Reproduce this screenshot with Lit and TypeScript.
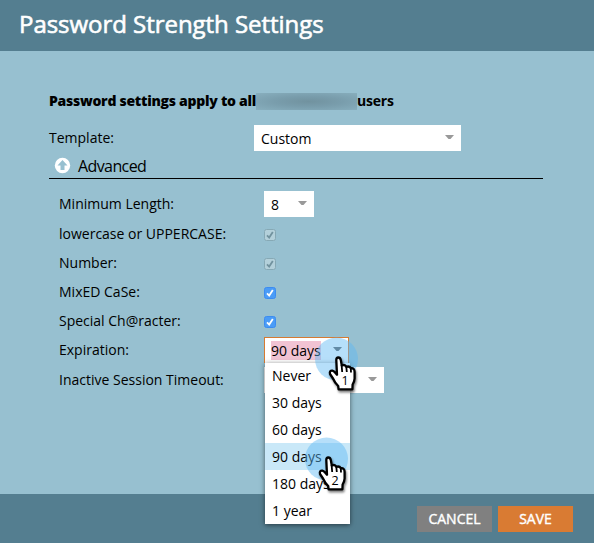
import { LitElement, html, css } from "lit";
import { customElement, property } from "lit/decorators.js";

@customElement("check-box")
class CheckBox extends LitElement {
  @property({ type: Boolean }) locked = false;
  static styles = css`
    :host { display: block; width: 12px; height: 12px; }
    svg { display: block; }
    .box { fill: #4a9cf7; stroke: #3c8cf0; }
    .tick { fill: none; stroke: #fff; stroke-width: 1.8; }
    .locked .box { fill: #b3d0da; stroke: #86a9b5; }
    .locked .tick { stroke: #71929e; }
  `;
  render() {
    return html`<svg class=${this.locked ? "locked" : ""} width="12" height="12" viewBox="0 0 12 12">
      <rect class="box" x=".5" y=".5" width="11" height="11" rx="2" />
      <path class="tick" d="M3 6.3 L5.2 8.6 L8.8 3" />
    </svg>`;
  }
}

@customElement("select-field")
class SelectField extends LitElement {
  @property() value = "";
  @property({ type: Boolean }) open = false;
  static styles = css`
    :host { display: flex; box-sizing: border-box; height: 26px; background: #fff; padding: 0 7px 0 7px;
      justify-content: space-between; align-items: flex-start; line-height: 27px; }
    :host([open]) { border: 1px solid #d57b33; border-bottom: 0; padding: 0 6px; line-height: 26px; }
    .mark { background: #f1c3d3; line-height: 19px; margin-top: 3px; height: 19px; }
    svg { margin-top: 10px; fill: #999; }
    :host([open]) svg { margin-top: 9px; fill: #666; }
  `;
  render() {
    return html`<span class=${this.open ? "mark" : ""}>${this.value}</span>
      <svg width="9" height="5" viewBox="0 0 9 5"><path d="M0 0H9L5.5 4H3.5Z" /></svg>`;
  }
}

@customElement("click-hand")
class ClickHand extends LitElement {
  @property() step = "";
  static styles = css`
    :host { display: block; width: 50px; height: 56px; }
    svg { display: block; overflow: visible; }
    .halo { fill: #5db8f3; opacity: .45; }
    .hand { fill: #fff; stroke: #000; stroke-width: 2.3; stroke-linejoin: round; filter: drop-shadow(1px 2px 1px rgba(0, 0, 0, .5)); }
    .folds { fill: none; stroke: #000; stroke-width: 1.8; }
    text { font: 12.5px "Open Sans", sans-serif; text-anchor: middle; }
  `;
  render() {
    return html`<svg width="50" height="56" viewBox="0 0 50 56">
      <circle class="halo" cx="21.5" cy="23" r="21.5" />
      <path class="hand" d="M21.3 24 Q21.3 21.5 23.3 21.5 Q25.3 21.5 25.8 24 L26.8 29.5 Q29.9 28 31.3 30.8 Q34.5 29.7 35.8 32.3 Q39.6 31.8 39.6 36 L39.6 42.5 Q39.5 45.5 37.6 48.5 L37.4 53.3 L23.6 53.3 L23.2 50 Q19.6 46.5 18 42.5 L15 38 Q14.2 34.4 17.3 34.6 Q19 35 22 38.7 Z" />
      <path class="folds" d="M26.6 29 L27.2 36 M31.3 31 L31.8 36 M35.8 32.5 L36 36.5" />
      <text x="30" y="48.5">${this.step}</text>
    </svg>`;
  }
}

@customElement("app-root")
class AppRoot extends LitElement {
  static styles = css`
    :host { display: flex; flex-direction: column; box-sizing: border-box; width: 594px; height: 543px; position: relative;
      overflow: hidden; background: #97c0d0; color: #000; font: 14px "Open Sans", sans-serif; }
    .head { height: 51px; background: #547e90; color: #fff; font-size: 24px; line-height: 48px; padding-left: 19px;
      white-space: nowrap; letter-spacing: -.04px; -webkit-text-stroke: .6px #fff; }
    .body { flex: 1; padding: 38px 51px 0 49px; }
    .intro { display: flex; height: 24px; line-height: 24px; font-weight: 700; white-space: nowrap; letter-spacing: -.22px; }
    .intro b { width: 207px; letter-spacing: -.27px; }
    .redacted { width: 101px; height: 17px; margin-top: 4px;
      background: radial-gradient(ellipse at 52% 50%, #71929f 0%, #799dac 45%, #88afbe 100%); }
    .template { display: flex; height: 26px; margin-top: 12px; line-height: 26px; }
    .template .label { width: 205px; }
    .template select-field { width: 207px; }
    .advanced { display: flex; height: 28px; box-sizing: border-box; border-bottom: 1px solid #000; line-height: 30px;
      font-size: 16px; letter-spacing: -.6px; padding-left: 5px; gap: 7px; }
    .advanced svg { margin-top: 6px; }
    .rows { display: grid; grid-template-columns: 205px auto; grid-template-rows: 30px 29px 29px 29px 29px 30px 30px;
      justify-content: start; padding: 10px 0 0 10px; line-height: 30px; }
    .cell { display: flex; align-items: flex-start; padding-top: 2px; }
    .cell check-box { margin-top: 8px; }
    .w50 { width: 50px; } .w85 { width: 85px; } .w120 { width: 120px; }
    .menu { position: absolute; left: 265px; top: 363px; width: 85px; height: 161px; box-sizing: border-box; background: #fff;
      box-shadow: 0 1px 5px rgba(0, 0, 0, .55); }
    .item { height: 27px; line-height: 27px; padding-left: 7px; }
    .item:first-child { height: 26px; line-height: 25px; }
    .active { background: #c9e8f8; }
    .foot { height: 49px; box-sizing: border-box; background: #547e90; display: flex; justify-content: flex-end; gap: 6px;
      padding: 12px 21px 0 0; }
    .btn { width: 75px; height: 26px; line-height: 26px; text-align: center; color: #fff; background: #808080;
      -webkit-text-stroke: .4px #fff; }
    .save { background: #d97b33; }
    click-hand { position: absolute; }
    .first { left: 314.5px; top: 335.5px; }
    .second { left: 304.5px; top: 436px; }
  `;
  render() {
    const item = (t: string) => html`<div class="item ${t === "90 days" ? "active" : ""}">${t}</div>`;
    const flag = (label: string, locked: boolean) => html`<div>${label}</div>
      <div class="cell"><check-box ?locked=${locked}></check-box></div>`;
    return html`
      <div class="head">Password Strength Settings</div>
      <div class="body">
        <div class="intro"><b>Password settings apply to all</b><span class="redacted"></span><span>users</span></div>
        <div class="template"><span class="label">Template:</span><select-field value="Custom"></select-field></div>
        <div class="advanced">
          <svg width="17" height="17" viewBox="0 0 17 17"><circle cx="8.5" cy="8.5" r="7.7" fill="#fff" />
            <path d="M8.5 3L13.5 8.6H10.5V13H6.5V8.6H3.5Z" fill="#97c0d0" /></svg>
          <span>Advanced</span>
        </div>
        <div class="rows">
          <div>Minimum Length:</div><div class="cell"><select-field class="w50" value="8"></select-field></div>
          ${flag("lowercase or UPPERCASE:", true)}
          ${flag("Number:", true)}
          ${flag("MixED CaSe:", false)}
          ${flag("Special Ch@racter:", false)}
          <div>Expiration:</div><div class="cell"><select-field class="w85" open value="90 days"></select-field></div>
          <div>Inactive Session Timeout:</div><div class="cell"><select-field class="w120" value=""></select-field></div>
        </div>
      </div>
      <div class="foot"><div class="btn">CANCEL</div><div class="btn save">SAVE</div></div>
      <div class="menu">${["Never", "30 days", "60 days", "90 days", "180 days", "1 year"].map(item)}</div>
      <click-hand class="first" step="1"></click-hand>
      <click-hand class="second" step="2"></click-hand>
    `;
  }
}
